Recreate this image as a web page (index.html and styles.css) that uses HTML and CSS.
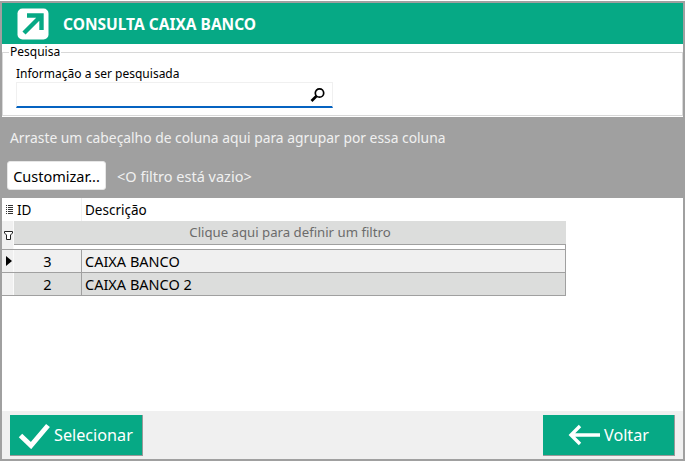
FILE: index.html
```html
<!DOCTYPE html>
<html>

<head>
	<meta charset="UTF-8">
	<title>Consulta Caixa Banco</title>
	<link rel="stylesheet" href="styles.css">
</head>

<body>
	<div class="window">
		<div class="header">
			<svg class="logo" width="32" height="32" viewBox="0 0 32 32">
				<rect x="0.5" y="0.5" width="31" height="31" rx="5" fill="#fff" />
				<path d="M7 25 L23 9 M10 7.5 H24.5 V22" fill="none" stroke="#06a985" stroke-width="4.4" />
			</svg>
			<h1>CONSULTA CAIXA BANCO</h1>
		</div>

		<div class="search">
			<fieldset class="searchbox">
				<legend>Pesquisa</legend>
				<label>Informação a ser pesquisada</label>
				<div class="input">
					<svg width="16" height="16" viewBox="0 0 16 16">
						<circle cx="9.5" cy="6" r="4.2" fill="none" stroke="#000" stroke-width="1.7" />
						<path d="M6.5 9 L1.5 14" stroke="#000" stroke-width="2.6" />
					</svg>
				</div>
			</fieldset>
		</div>

		<div class="grouppanel">
			<div class="grouptext">Arraste um cabeçalho de coluna aqui para agrupar por essa coluna</div>
			<div class="filterbar">
				<button class="custom">Customizar...</button>
				<span class="emptyfilter">&lt;O filtro está vazio&gt;</span>
			</div>
		</div>

		<div class="grid">
			<div class="row head">
				<div class="ind">
					<svg width="7" height="9" viewBox="0 0 7 9">
						<path d="M0 .5H1M2 .5H7M0 2.5H1M2 2.5H7M0 4.5H1M2 4.5H7M0 6.5H1M2 6.5H7M0 8.5H1M2 8.5H7" stroke="#333" stroke-width="1" />
					</svg>
				</div>
				<div class="cell id">ID</div>
				<div class="cell desc">Descrição</div>
			</div>
			<div class="row filter">
				<div class="ind">
					<svg class="funnel" width="9" height="9" viewBox="0 0 9 9">
						<path d="M.5 .5H8.5V2L6.5 4V8.5H2.5V4L.5 2Z" fill="#fff" stroke="#222" stroke-width="1" />
					</svg>
				</div>
				<div class="filtertext">Clique aqui para definir um filtro</div>
			</div>
			<div class="row spacer">
				<div class="ind"></div>
				<div class="gap"></div>
			</div>
			<div class="row data odd">
				<div class="ind">
					<svg width="6" height="10" viewBox="0 0 6 10">
						<path d="M0 0L6 5L0 10Z" fill="#000" />
					</svg>
				</div>
				<div class="cell num">3</div>
				<div class="cell text">CAIXA BANCO</div>
			</div>
			<div class="row data even">
				<div class="ind"></div>
				<div class="cell num">2</div>
				<div class="cell text">CAIXA BANCO 2</div>
			</div>
		</div>

		<div class="footer">
			<button class="action select">
				<svg width="34" height="28" viewBox="0 0 34 28">
					<path d="M2.5 14.5 L13 24.5 L30 4.5" fill="none" stroke="#fff" stroke-width="5" />
				</svg>
				Selecionar
			</button>
			<button class="action back">
				<svg width="32" height="22" viewBox="0 0 32 22">
					<path d="M32 11 H4 M12 2 L3 11 L12 20" fill="none" stroke="#fff" stroke-width="3.4" />
				</svg>
				Voltar
			</button>
		</div>
	</div>
</body>

</html>
```

FILE: styles.css
```css
html,
body {
	margin: 0;
	padding: 0;
	background: #fff;
}

body {
	font-family: "Noto Sans", sans-serif;
	font-size: 12px;
	color: #000;
}

.window {
	box-sizing: border-box;
	width: 685px;
	height: 460px;
	margin-top: 1px;
	border: 2px solid #a0a0a0;
	display: flex;
	flex-direction: column;
	background: #fff;
}

.header {
	height: 41px;
	width: 681px;
	background: #06a985;
	display: flex;
	align-items: center;
	flex: none;
}

.logo {
	margin-left: 15px;
}

h1 {
	margin: 0 0 0 14px;
	color: #fff;
	font-size: 15.5px;
	font-weight: 700;
}

.search {
	box-sizing: border-box;
	height: 73px;
	flex: none;
	padding-top: 2px;
}

.searchbox {
	box-sizing: border-box;
	width: 681px;
	height: 70px;
	margin: 0;
	padding: 0 0 0 13px;
	border: 1px solid #d8d8d8;
}

legend {
	padding: 0 1px;
	margin-left: -7px;
	line-height: 12px;
	height: 12px;
}

label {
	display: block;
	margin-top: 8px;
	line-height: 16px;
}

.input {
	box-sizing: border-box;
	width: 317px;
	height: 26px;
	border: 1px solid #f0f0f0;
	border-bottom: 2px solid #0563c1;
	display: flex;
	justify-content: flex-end;
	align-items: center;
	padding-right: 6px;
}

.grouppanel {
	height: 81px;
	flex: none;
	background: #a0a0a0;
	color: #f0f0f0;
}

.grouptext {
	padding: 12px 0 0 8px;
	line-height: 18px;
	font-size: 13.85px;
}

.filterbar {
	display: flex;
	align-items: center;
	gap: 11px;
	margin: 14px 0 0 5px;
}

.custom {
	width: 99px;
	height: 29px;
	padding: 0;
	border: 1px solid #e6e6e6;
	border-radius: 3px;
	background: #fff;
	font-family: inherit;
	font-size: 14.5px;
	color: #000;
}

.emptyfilter {
	font-size: 14.5px;
}

.grid {
	flex: 1;
	width: 564px;
}

.row {
	display: flex;
}

.ind {
	box-sizing: border-box;
	width: 12px;
	flex: none;
	display: flex;
	align-items: center;
	justify-content: center;
	padding-left: 2px;
	background: #f0f0f0;
	border-right: 1px solid #fafafa;
}

.head .ind {
	background: #fff;
	border-right: 0;
}

.funnel {
	margin-top: 6px;
}

.head {
	height: 23px;
	line-height: 25px;
	font-size: 13.5px;
}

.cell {
	box-sizing: border-box;
}

.id {
	width: 68px;
	padding-left: 3px;
	border-right: 1px solid #f0f0f0;
}

.desc {
	padding-left: 3px;
}

.filter {
	height: 23px;
}

.filtertext {
	flex: 1;
	background: #dcdddc;
	color: #6b6b6b;
	text-align: center;
	line-height: 23px;
	font-size: 13.2px;
}

.spacer {
	height: 5px;
}

.gap {
	flex: 1;
	border-top: 1px solid #a0a0a0;
	border-right: 1px solid #a0a0a0;
}

.data {
	height: 22px;
	line-height: 22px;
	font-size: 14.5px;
	border-top: 1px solid #a0a0a0;
	border-right: 1px solid #a0a0a0;
}

.data:last-child {
	border-bottom: 1px solid #a0a0a0;
}

.odd {
	background: #f0f0f0;
}

.even {
	background: #dcdddc;
}

.num {
	width: 68px;
	text-align: center;
	border-right: 1px solid #a0a0a0;
}

.text {
	padding-left: 3px;
}

.footer {
	height: 48px;
	flex: none;
	background: #f0f0f0;
	display: flex;
	justify-content: space-between;
	padding: 4px 8px 3px 8px;
	box-sizing: border-box;
}

.action {
	display: flex;
	align-items: center;
	box-sizing: border-box;
	height: 41px;
	padding: 0;
	border: 0;
	border-right: 1px solid #999;
	border-bottom: 1px solid #999;
	background: #06a985;
	color: #fff;
	font-family: inherit;
	font-size: 16.2px;
}

.select {
	width: 133px;
	padding-left: 8px;
	gap: 2px;
}

.back {
	width: 132px;
	padding-left: 25px;
	gap: 4px;
}
```
